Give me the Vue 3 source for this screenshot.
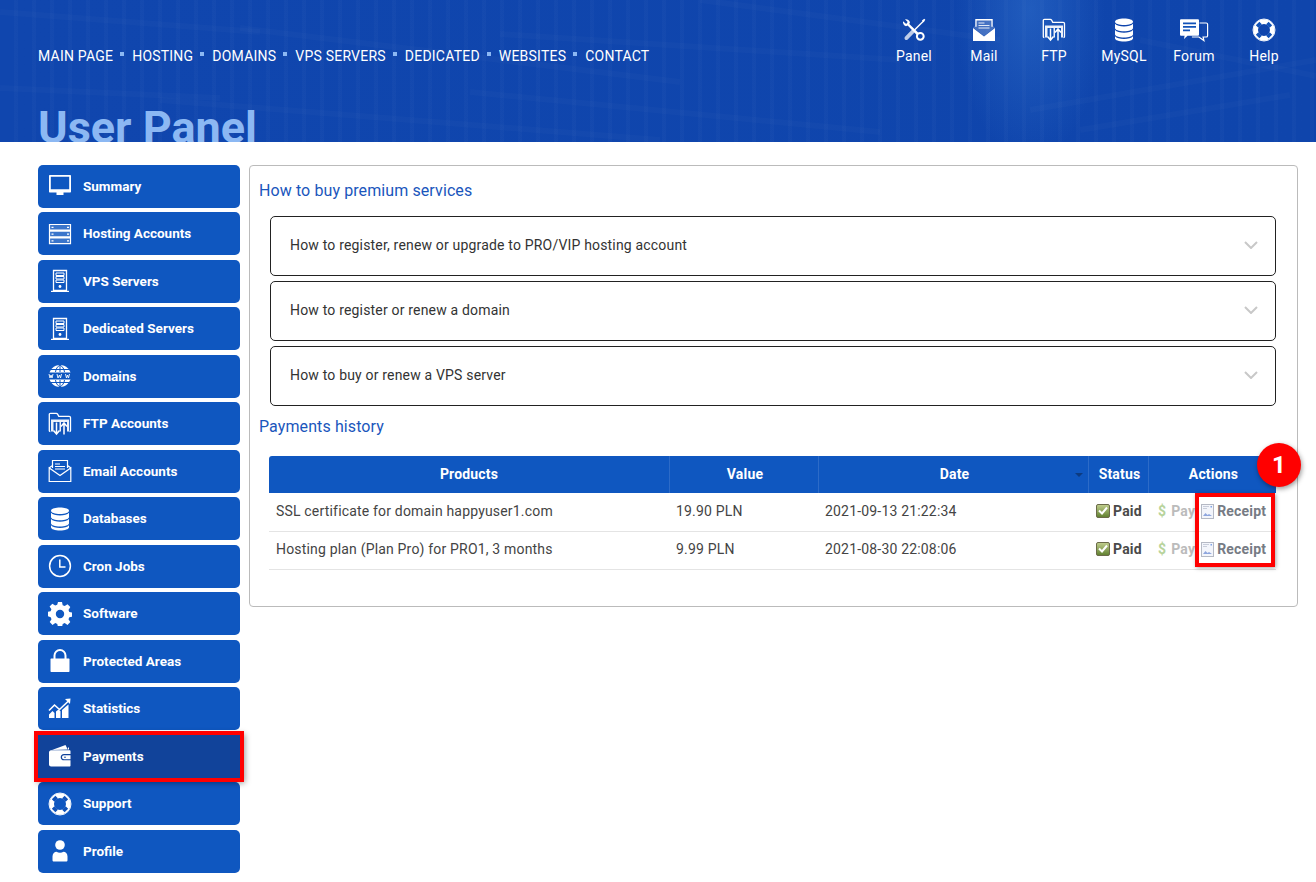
<script setup>
const navLinks = ['Main page', 'Hosting', 'Domains', 'VPS servers', 'Dedicated', 'Websites', 'Contact']

const topLinks = [
  { label: 'Panel', icon: 'tools' },
  { label: 'Mail', icon: 'mailfull' },
  { label: 'FTP', icon: 'ftp' },
  { label: 'MySQL', icon: 'db' },
  { label: 'Forum', icon: 'forum' },
  { label: 'Help', icon: 'ring' },
]

const menu = [
  { label: 'Summary', icon: 'monitor' },
  { label: 'Hosting Accounts', icon: 'rack' },
  { label: 'VPS Servers', icon: 'tower' },
  { label: 'Dedicated Servers', icon: 'tower' },
  { label: 'Domains', icon: 'globe' },
  { label: 'FTP Accounts', icon: 'ftp' },
  { label: 'Email Accounts', icon: 'mail' },
  { label: 'Databases', icon: 'db' },
  { label: 'Cron Jobs', icon: 'clock' },
  { label: 'Software', icon: 'gear' },
  { label: 'Protected Areas', icon: 'lock' },
  { label: 'Statistics', icon: 'stats' },
  { label: 'Payments', icon: 'wallet', active: true },
  { label: 'Support', icon: 'ring' },
  { label: 'Profile', icon: 'user' },
]

const faqs = [
  'How to register, renew or upgrade to PRO/VIP hosting account',
  'How to register or renew a domain',
  'How to buy or renew a VPS server',
]

const payments = [
  { product: 'SSL certificate for domain happyuser1.com', value: '19.90 PLN', date: '2021-09-13 21:22:34' },
  { product: 'Hosting plan (Plan Pro) for PRO1, 3 months', value: '9.99 PLN', date: '2021-08-30 22:08:06' },
]

// faint streaks in the header photo
const streaks = [
  'M0 12 L260 32', 'M240 28 L680 82', 'M700 0 L1000 40', 'M0 88 L220 98', 'M160 100 L660 140',
  'M470 92 L880 132', 'M500 34 L900 60', 'M1030 110 L1316 60', 'M1080 130 L1290 95', 'M1140 40 L1316 76',
]
</script>

<template>
  <div class="page">
    <svg class="sprite" width="0" height="0">
      <defs>
        <symbol id="i-tools" viewBox="0 0 24 24">
          <path d="M1 4.800c-.4 2.200.8 4.300 3 5l1.600-.7 9.200 9.300 1.800-1.800-9.300-9.200.7-1.600C7.300 3.600 5.200 2.400 3 2.800l2.700 2.700-1.500 2z" fill="currentColor" transform="translate(0 -1.500)"/>
          <circle cx="18.300" cy="18.300" r="3.400" fill="none" stroke="currentColor" stroke-width="2"/>
          <path d="m21.800 2.800-9.300 9.300" stroke="currentColor" stroke-width="1.400"/>
          <path d="m22.300 .8 1 1-1.700 2.400-1.700-1.700z" fill="currentColor"/>
          <path d="m10.300 11.300 2.700 2.700-7.300 7.500c-.8.700-2 .7-2.700 0s-.7-1.900 0-2.700z" fill="currentColor" opacity=".72"/>
        </symbol>
        <symbol id="i-mailfull" viewBox="0 0 24 24">
          <path d="M1 10 12 18.500 23 10V23H1z" fill="currentColor"/>
          <path d="M1 9.500 4 7.300V1.500h16v5.800l3 2.200-11 8.500z" fill="currentColor" opacity=".2"/>
          <path d="M3.300 8.800V1h17.400v7.800H19.400V2.400H4.600v6.400z" fill="currentColor"/>
          <path d="M6.500 4.500h6v1.100h-6zM6.500 7h11v1.100h-11zM6.500 9.500h11v1.100h-11z" fill="currentColor" opacity=".85"/>
        </symbol>
        <symbol id="i-mail" viewBox="0 0 24 24">
          <path d="M4.500 9V1.500h15V9M1 9l3.500-2.500M23 9l-3.500-2.500M1.200 9v13.500h21.600V9L12 16.500z" fill="none" stroke="currentColor" stroke-width="1.200"/>
          <path d="M7 4.500h5v1H7zM7 7h10v1H7zM7 9.500h10v1H7z" fill="currentColor"/>
        </symbol>
        <symbol id="i-ftp" viewBox="0 0 24 24">
          <path d="M2.300 19.500c-.6 0-1-.4-1-1V2.500c0-.8.400-1.200 1.200-1.200h5.800c.6 0 1 .3 1.300.8l1.200 2.200h10.400c.9 0 1.300.5 1.300 1.300v12.900c0 .6-.4 1-1 1" fill="none" stroke="currentColor" stroke-width="1.300"/>
          <path d="M3 7.500h18v12H3z" fill="currentColor" opacity=".92"/>
          <path d="M8.500 10v13M16 22.500V10" stroke="#1152b8" stroke-width="6"/>
          <path d="M8.500 10.500v11.500m-3-3.500 3 3.500 3-3.500M16 22.500V11m-3 3.500 3-3.500 3 3.500" fill="none" stroke="currentColor" stroke-width="1.500"/>
        </symbol>
        <symbol id="i-db" viewBox="0 0 24 24">
          <path d="M12 .5c5 0 9 1.300 9 3.200S17 7 12 7 3 5.600 3 3.700 7 .5 12 .5z" fill="currentColor"/>
          <path d="M3 5.800C4.500 7.500 8 8.500 12 8.500s7.500-1 9-2.700V10c0 1.900-4 3.300-9 3.300S3 11.900 3 10z" fill="currentColor"/>
          <path d="M3 12c1.500 1.700 5 2.700 9 2.700s7.500-1 9-2.700v4.200c0 1.900-4 3.300-9 3.300s-9-1.400-9-3.300z" fill="currentColor"/>
          <path d="M3 18.200c1.500 1.700 5 2.700 9 2.700s7.500-1 9-2.700v2c0 1.900-4 3.300-9 3.300s-9-1.400-9-3.300z" fill="currentColor"/>
        </symbol>
        <symbol id="i-forum" viewBox="0 0 30 24">
          <path d="M1 2.500c0-.8.500-1.300 1.300-1.300h16.400c.8 0 1.300.5 1.300 1.300v14c0 .8-.5 1.300-1.300 1.300H8.500L5 21l.6-3.200H2.300c-.8 0-1.300-.5-1.300-1.300z" fill="currentColor"/>
          <path d="M4 4.500h13v1.700H4zM4 8h13v1.700H4zM4 11.500h7v1.700H4z" fill="#1152b8"/>
          <path d="M20.500 5h6.800c.8 0 1.300.5 1.300 1.300v11.400c0 .8-.5 1.300-1.300 1.300h-3.200l.8 3.500-5-3.500h-7" fill="none" stroke="currentColor" stroke-width="1.200"/>
        </symbol>
        <symbol id="i-ring" viewBox="0 0 24 24">
          <path d="M12 1.300a10.700 10.700 0 1 1 0 21.400 10.700 10.700 0 0 1 0-21.400zm0 4.700a6 6 0 1 0 0 12 6 6 0 0 0 0-12z" fill="currentColor" fill-rule="evenodd"/>
          <path d="m5.600 5.600 2.500 2.500M18.400 5.600l-2.500 2.500M5.600 18.400l2.500-2.500M18.400 18.400l-2.500-2.500" stroke="#1152b8" stroke-width="5"/>
          <circle cx="12" cy="12" r="11" fill="none" stroke="currentColor" stroke-width=".9"/>
        </symbol>
        <symbol id="i-monitor" viewBox="0 0 24 24">
          <path d="M2 1h20c.6 0 1 .4 1 1v15.500c0 .6-.4 1-1 1h-6.500V21H8.500v-2.500H2c-.6 0-1-.4-1-1V2c0-.6.400-1 1-1zm.8 1.800v12.400h18.400V2.800z" fill="currentColor" fill-rule="evenodd"/>
        </symbol>
        <symbol id="i-rack" viewBox="0 0 24 24">
          <path d="M1.500 2.500h21v5.700h-21zM1.500 9.200h21v5.700h-21zM1.500 15.900h21v5.700h-21z" fill="currentColor" fill-opacity=".18" stroke="currentColor" stroke-width="1.200"/>
          <path d="M3.500 4.800h2v1.200h-2zM19 4.800h2v1.200h-2zM3.500 11.500h2v1.200h-2zM19 11.500h2v1.200h-2zM3.500 18.200h2v1.200h-2zM19 18.200h2v1.200h-2z" fill="currentColor"/>
        </symbol>
        <symbol id="i-tower" viewBox="0 0 24 24">
          <path d="M5.500 1.500h13v20h-13z" fill="none" stroke="currentColor" stroke-width="1.300"/>
          <path d="M8 4h8v2.500H8zM8 7.500h8V10H8zM8 11h8v2.500H8z" fill="none" stroke="currentColor" stroke-width="1"/>
          <circle cx="12" cy="17.500" r="1.400" fill="currentColor"/>
          <path d="M3 22.400h18" stroke="currentColor" stroke-width="1.200"/>
        </symbol>
        <symbol id="i-globe" viewBox="0 0 24 24">
          <circle cx="12" cy="12" r="11" fill="currentColor"/>
          <path d="M0 8.500h24v7H0z" fill="#0f57c0"/>
          <path d="M12 1v7M12 16v7M7.500 8c.3-3 2-5.500 4.500-7 2.500 1.500 4.200 4 4.500 7M7.500 16c.3 3 2 5.500 4.500 7 2.500-1.500 4.200-4 4.500-7M3 5.500h18M3 18.500h18" fill="none" stroke="#0f57c0" stroke-width="1"/>
          <path d="m1 10 1 4 1-3 1 3 1-4M9 10l1 4 1.500-3 1 3 1-4M17.500 10l1 4 1-3 1 3 1-4" fill="none" stroke="currentColor" stroke-width=".9"/>
        </symbol>
        <symbol id="i-clock" viewBox="0 0 24 24">
          <circle cx="12" cy="12" r="10.400" fill="none" stroke="currentColor" stroke-width="1.500"/>
          <path d="M11.800 5.500V13h5.700" fill="none" stroke="currentColor" stroke-width="1.500"/>
        </symbol>
        <symbol id="i-gear" viewBox="0 0 24 24">
          <path d="M10 0h4l.7 3.300 2 .8L19.500 2.300l2.800 2.800-1.800 2.800.8 2 3.300.7v4l-3.300.7-.8 2 1.800 2.800-2.800 2.800-2.800-1.800-2 .8-.7 3.300h-4l-.7-3.300-2-.8-2.800 1.800-2.800-2.800 1.800-2.800-.8-2L-.7 14v-4l3.300-.7.8-2-1.800-2.800 2.800-2.800 2.800 1.800 2-.8zM12 7.800a4.200 4.200 0 1 0 0 8.400 4.200 4.200 0 0 0 0-8.400z" fill="currentColor" fill-rule="evenodd"/>
        </symbol>
        <symbol id="i-lock" viewBox="0 0 24 24">
          <path d="M6.500 10.500V6.500a5.500 5.500 0 0 1 11 0v4" fill="none" stroke="currentColor" stroke-width="2"/>
          <path d="M3.500 9.500h17c.6 0 1 .4 1 1V22c0 .6-.4 1-1 1h-17c-.6 0-1-.4-1-1V10.500c0-.6.400-1 1-1z" fill="currentColor"/>
        </symbol>
        <symbol id="i-stats" viewBox="0 0 24 24">
          <path d="M1 21v-3.500L4.500 14l2 2v5zM8 21v-6.500l2.500-2 2 1.800V21zM14 21v-8l4-3.500 2.500-2V21z" fill="currentColor"/>
          <path d="m1 13.500 5.500-5.500 5 4.500L21 3.500" fill="none" stroke="currentColor" stroke-width="1.600"/>
          <path d="m17 2 5.500-.5-.5 5.500z" fill="currentColor"/>
        </symbol>
        <symbol id="i-wallet" viewBox="0 0 24 24">
          <path d="M4 6 17.500 1l2.300 4.500z" fill="currentColor"/>
          <path d="M20 3.500h1v2h-1z" fill="currentColor"/>
          <path d="M3 6.200h18.500c.6 0 1 .4 1 1V10h-6.500c-2 0-3.300 1.300-3.300 3.200s1.300 3.100 3.300 3.100h6.500v5.200c0 .6-.4 1-1 1H3c-1 0-2-1-2-2V8.200c0-1 1-2 2-2z" fill="currentColor"/>
          <path d="M16 11.200h6.500v4H16c-1.200 0-2-.9-2-2s.8-2 2-2zm1 1.200a.8.8 0 1 0 0 1.600.8.8 0 0 0 0-1.600z" fill="currentColor" fill-rule="evenodd"/>
        </symbol>
        <symbol id="i-user" viewBox="0 0 24 24">
          <circle cx="12" cy="6" r="4.800" fill="currentColor"/>
          <path d="M6 22.500c-1 0-1.500-.5-1.500-1.500v-3.500c0-2.700 2-4.700 4-4.700 1 .7 2.200 1 3.500 1s2.500-.3 3.500-1c2 0 4 2 4 4.700V21c0 1-.5 1.500-1.500 1.500z" fill="currentColor"/>
        </symbol>
      </defs>
    </svg>

    <header class="hero">
      <svg class="hero-lines" width="1316" height="142" viewBox="0 0 1316 142">
        <path v-for="d in streaks" :key="d" :d="d" stroke="#fff" stroke-opacity=".018" stroke-width="6" fill="none" />
      </svg>
      <div class="hero-top">
        <nav class="nav">
          <template v-for="(link, i) in navLinks" :key="link">
            <span v-if="i > 0" class="nav-dot"></span>
            <a class="nav-link">{{ link }}</a>
          </template>
        </nav>
        <div class="quick">
          <a v-for="item in topLinks" :key="item.label" class="quick-link">
            <svg class="quick-icon"><use :href="'#i-' + item.icon" /></svg>
            <span>{{ item.label }}</span>
          </a>
        </div>
      </div>
      <h1 class="hero-title">User Panel</h1>
    </header>

    <div class="body">
      <aside class="side">
        <a v-for="item in menu" :key="item.label" class="side-item" :class="{ active: item.active }">
          <svg class="side-icon"><use :href="'#i-' + item.icon" /></svg>
          <span>{{ item.label }}</span>
        </a>
      </aside>

      <main class="panel">
        <h2 class="panel-title">How to buy premium services</h2>
        <div class="faq">
          <div v-for="q in faqs" :key="q" class="faq-item">
            <span>{{ q }}</span>
            <svg class="chev" width="14" height="8" viewBox="0 0 14 8"><path d="m1 1 6 6 6-6" fill="none" stroke="#c8c8c8" stroke-width="2"/></svg>
          </div>
        </div>

        <h2 class="panel-title history">Payments history</h2>
        <div class="table-wrap">
          <table class="pay">
            <colgroup>
              <col style="width: 400px" />
              <col style="width: 149px" />
              <col style="width: 270px" />
              <col style="width: 60px" />
              <col style="width: 128px" />
            </colgroup>
            <thead>
              <tr>
                <th>Products</th>
                <th>Value</th>
                <th class="sorted">Date<i class="sort"></i></th>
                <th>Status</th>
                <th>Actions</th>
              </tr>
            </thead>
            <tbody>
              <tr v-for="p in payments" :key="p.date">
                <td>{{ p.product }}</td>
                <td>{{ p.value }}</td>
                <td>{{ p.date }}</td>
                <td class="status">
                  <svg width="14" height="14" viewBox="0 0 14 14">
                    <defs>
                      <linearGradient id="paid-fill" x1="0" y1="0" x2="0" y2="1">
                        <stop offset="0" stop-color="#c2cf8f" />
                        <stop offset="1" stop-color="#5f7f2e" />
                      </linearGradient>
                    </defs>
                    <rect x=".5" y=".5" width="13" height="13" rx="1.500" fill="url(#paid-fill)" stroke="#6b6b4a"/>
                    <path d="m3 6.500 3 3 5-6" fill="none" stroke="#fff" stroke-width="2"/>
                  </svg>
                  <b>Paid</b>
                </td>
                <td class="actions">
                  <span class="pay-off"><i>$</i>Pay</span>
                  <span class="receipt">
                    <svg width="13" height="15" viewBox="0 0 13 15">
                      <rect x=".5" y=".5" width="12" height="14" fill="#f3f5fb" stroke="#b5b9c4"/>
                      <path d="M2 2h6v1H2zM2 4h4v1H2z" fill="#c8cdda"/>
                      <path d="M9.500 2h1.500v1.500H9.500z" fill="#7fa3e8"/>
                      <path d="m2 12 2.500-3 2 2 1.500-1 3 2z" fill="#8ea6de"/>
                    </svg>
                    <b>Receipt</b>
                  </span>
                </td>
              </tr>
            </tbody>
          </table>
          <div class="mark-box"></div>
          <div class="mark-badge">1</div>
        </div>
      </main>
    </div>
  </div>
</template>

<style scoped>
.page {
  width: 1316px;
  height: 882px;
  overflow: hidden;
  background: #fff;
  font-family: Roboto, "Liberation Sans", sans-serif;
  color: #444;
}

.sprite {
  position: absolute;
}

.hero {
  position: relative;
  height: 142px;
  overflow: hidden;
  padding: 0 38px;
  box-sizing: border-box;
  color: #fff;
  background:
    repeating-linear-gradient(90deg, rgba(255, 255, 255, 0) 0 14px, rgba(255, 255, 255, 0.018) 14px 18px),
    radial-gradient(ellipse 75px 150px at 1030px 10px, rgba(70, 140, 225, 0.32), rgba(70, 140, 225, 0) 100%),
    linear-gradient(90deg, #1046ae 0%, #0f45ac 100%);
}

.hero-lines {
  position: absolute;
  left: 0;
  top: 0;
}

.hero-top {
  position: relative;
  display: flex;
  justify-content: space-between;
  height: 98px;
}

.nav {
  display: flex;
  align-items: center;
  height: 112px;
  font-size: 14px;
  letter-spacing: 0.22px;
  text-transform: uppercase;
}

.nav-link {
  white-space: nowrap;
}

.nav-dot {
  width: 4px;
  height: 4px;
  margin: 0 8px 4px 7px;
  background: #8cb8f3;
}

.quick {
  display: flex;
  margin-right: -21px;
  padding-top: 18px;
}

.quick-link {
  width: 70px;
  display: flex;
  flex-direction: column;
  align-items: center;
  font-size: 14px;
  line-height: 17px;
  letter-spacing: 0.2px;
}

.quick-icon {
  width: 30px;
  height: 24px;
  margin-bottom: 6px;
}

.hero-title {
  position: relative;
  margin: 0;
  padding-top: 6px;
  font-size: 45px;
  line-height: 48px;
  font-weight: 700;
  color: #8cb8f3;
}

.body {
  display: flex;
  align-items: flex-start;
  gap: 9px;
  padding: 22.9px 18px 0 38px;
}

.side {
  width: 202px;
  flex: none;
  display: flex;
  flex-direction: column;
  gap: 4.5px;
}

.side-item {
  height: 43px;
  display: flex;
  align-items: center;
  gap: 11px;
  padding-left: 10px;
  border-radius: 5px;
  background: #0f57c0;
  color: #fff;
  font-size: 13.5px;
  font-weight: 700;
}

.side-item span {
  margin-bottom: 1px;
}

.side-item.active {
  background: #11439a;
  outline: 4px solid #f00;
  border-radius: 0;
  box-shadow: 2px 2px 6px 3px rgba(0, 0, 0, 0.4);
  position: relative;
}

.side-icon {
  width: 24px;
  height: 24px;
  flex: none;
}

.panel {
  flex: 1;
  height: 442px;
  margin-top: 0.1px;
  box-sizing: border-box;
  border: 1px solid #bbb;
  border-radius: 4px;
  padding: 14px 21px 0 9px;
}

.panel-title {
  margin: 0;
  font-size: 16px;
  line-height: 21px;
  font-weight: 400;
  letter-spacing: 0.1px;
  color: #1a56bc;
}

.history {
  margin-top: 10px;
}

.faq {
  display: flex;
  flex-direction: column;
  gap: 5px;
  margin: 15px 0 0 11px;
}

.faq-item {
  height: 60px;
  box-sizing: border-box;
  display: flex;
  align-items: center;
  justify-content: space-between;
  padding: 0 17px 2px 19px;
  border: 1px solid #222;
  border-radius: 5px;
  font-size: 14px;
  color: #333;
  letter-spacing: 0.18px;
}

.table-wrap {
  position: relative;
  margin: 19px 0 0 10px;
}

.pay {
  width: 1007px;
  table-layout: fixed;
  border-collapse: separate;
  border-spacing: 0;
  font-size: 14px;
  letter-spacing: 0.18px;
}

.pay th {
  height: 37px;
  padding: 1px 0 1px 2px;
  box-sizing: border-box;
  background: #0f57c0;
  color: #fff;
  font-weight: 700;
  text-align: center;
  border-left: 1px solid #2c6bc8;
}

.pay th:first-child {
  border-left: none;
  padding-left: 0;
  border-radius: 3px 0 0 0;
}

.pay th:last-child {
  border-radius: 0 3px 0 0;
}

.sorted {
  position: relative;
}

.sort {
  position: absolute;
  right: 5px;
  top: 17px;
  border: 4px solid transparent;
  border-top: 4px solid #0d3b80;
  border-bottom: none;
}

.pay td {
  height: 38px;
  box-sizing: border-box;
  padding: 0 7px 1px;
  border-bottom: 1px solid #e4e4e4;
  white-space: nowrap;
  color: #444;
}

.pay tbody tr:first-child td {
  height: 39px;
  padding-bottom: 2px;
}

.pay tbody tr:last-child td {
  padding-bottom: 2px;
}

.pay td.status,
.pay td.actions {
  overflow: hidden;
}

.pay td.status {
  padding-left: 8px;
}

.pay td.actions {
  padding-left: 8px;
}

.status svg {
  vertical-align: -2px;
  margin-right: 3px;
}

.status b {
  color: #4a4a4a;
}

.pay-off {
  color: #bbb;
  font-weight: 700;
  margin-right: 6px;
  margin-left: 2px;
}

.pay-off i {
  font-style: normal;
  color: #b7d39b;
  margin-right: 5px;
}

.receipt svg {
  vertical-align: -3px;
  margin-right: 3px;
}

.receipt b {
  color: #767b84;
}

.mark-box {
  position: absolute;
  left: 926px;
  top: 37px;
  width: 72px;
  height: 66px;
  border: 4px solid #f00;
  box-shadow: 1px 1px 4px rgba(0, 0, 0, 0.35);
}

.mark-badge {
  position: absolute;
  left: 988px;
  top: -13px;
  width: 44px;
  height: 44px;
  border-radius: 50%;
  background: #f00;
  color: #fff;
  font-size: 24px;
  font-weight: 700;
  line-height: 44px;
  text-align: center;
  box-shadow: 1px 2px 5px rgba(0, 0, 0, 0.4);
}
</style>
